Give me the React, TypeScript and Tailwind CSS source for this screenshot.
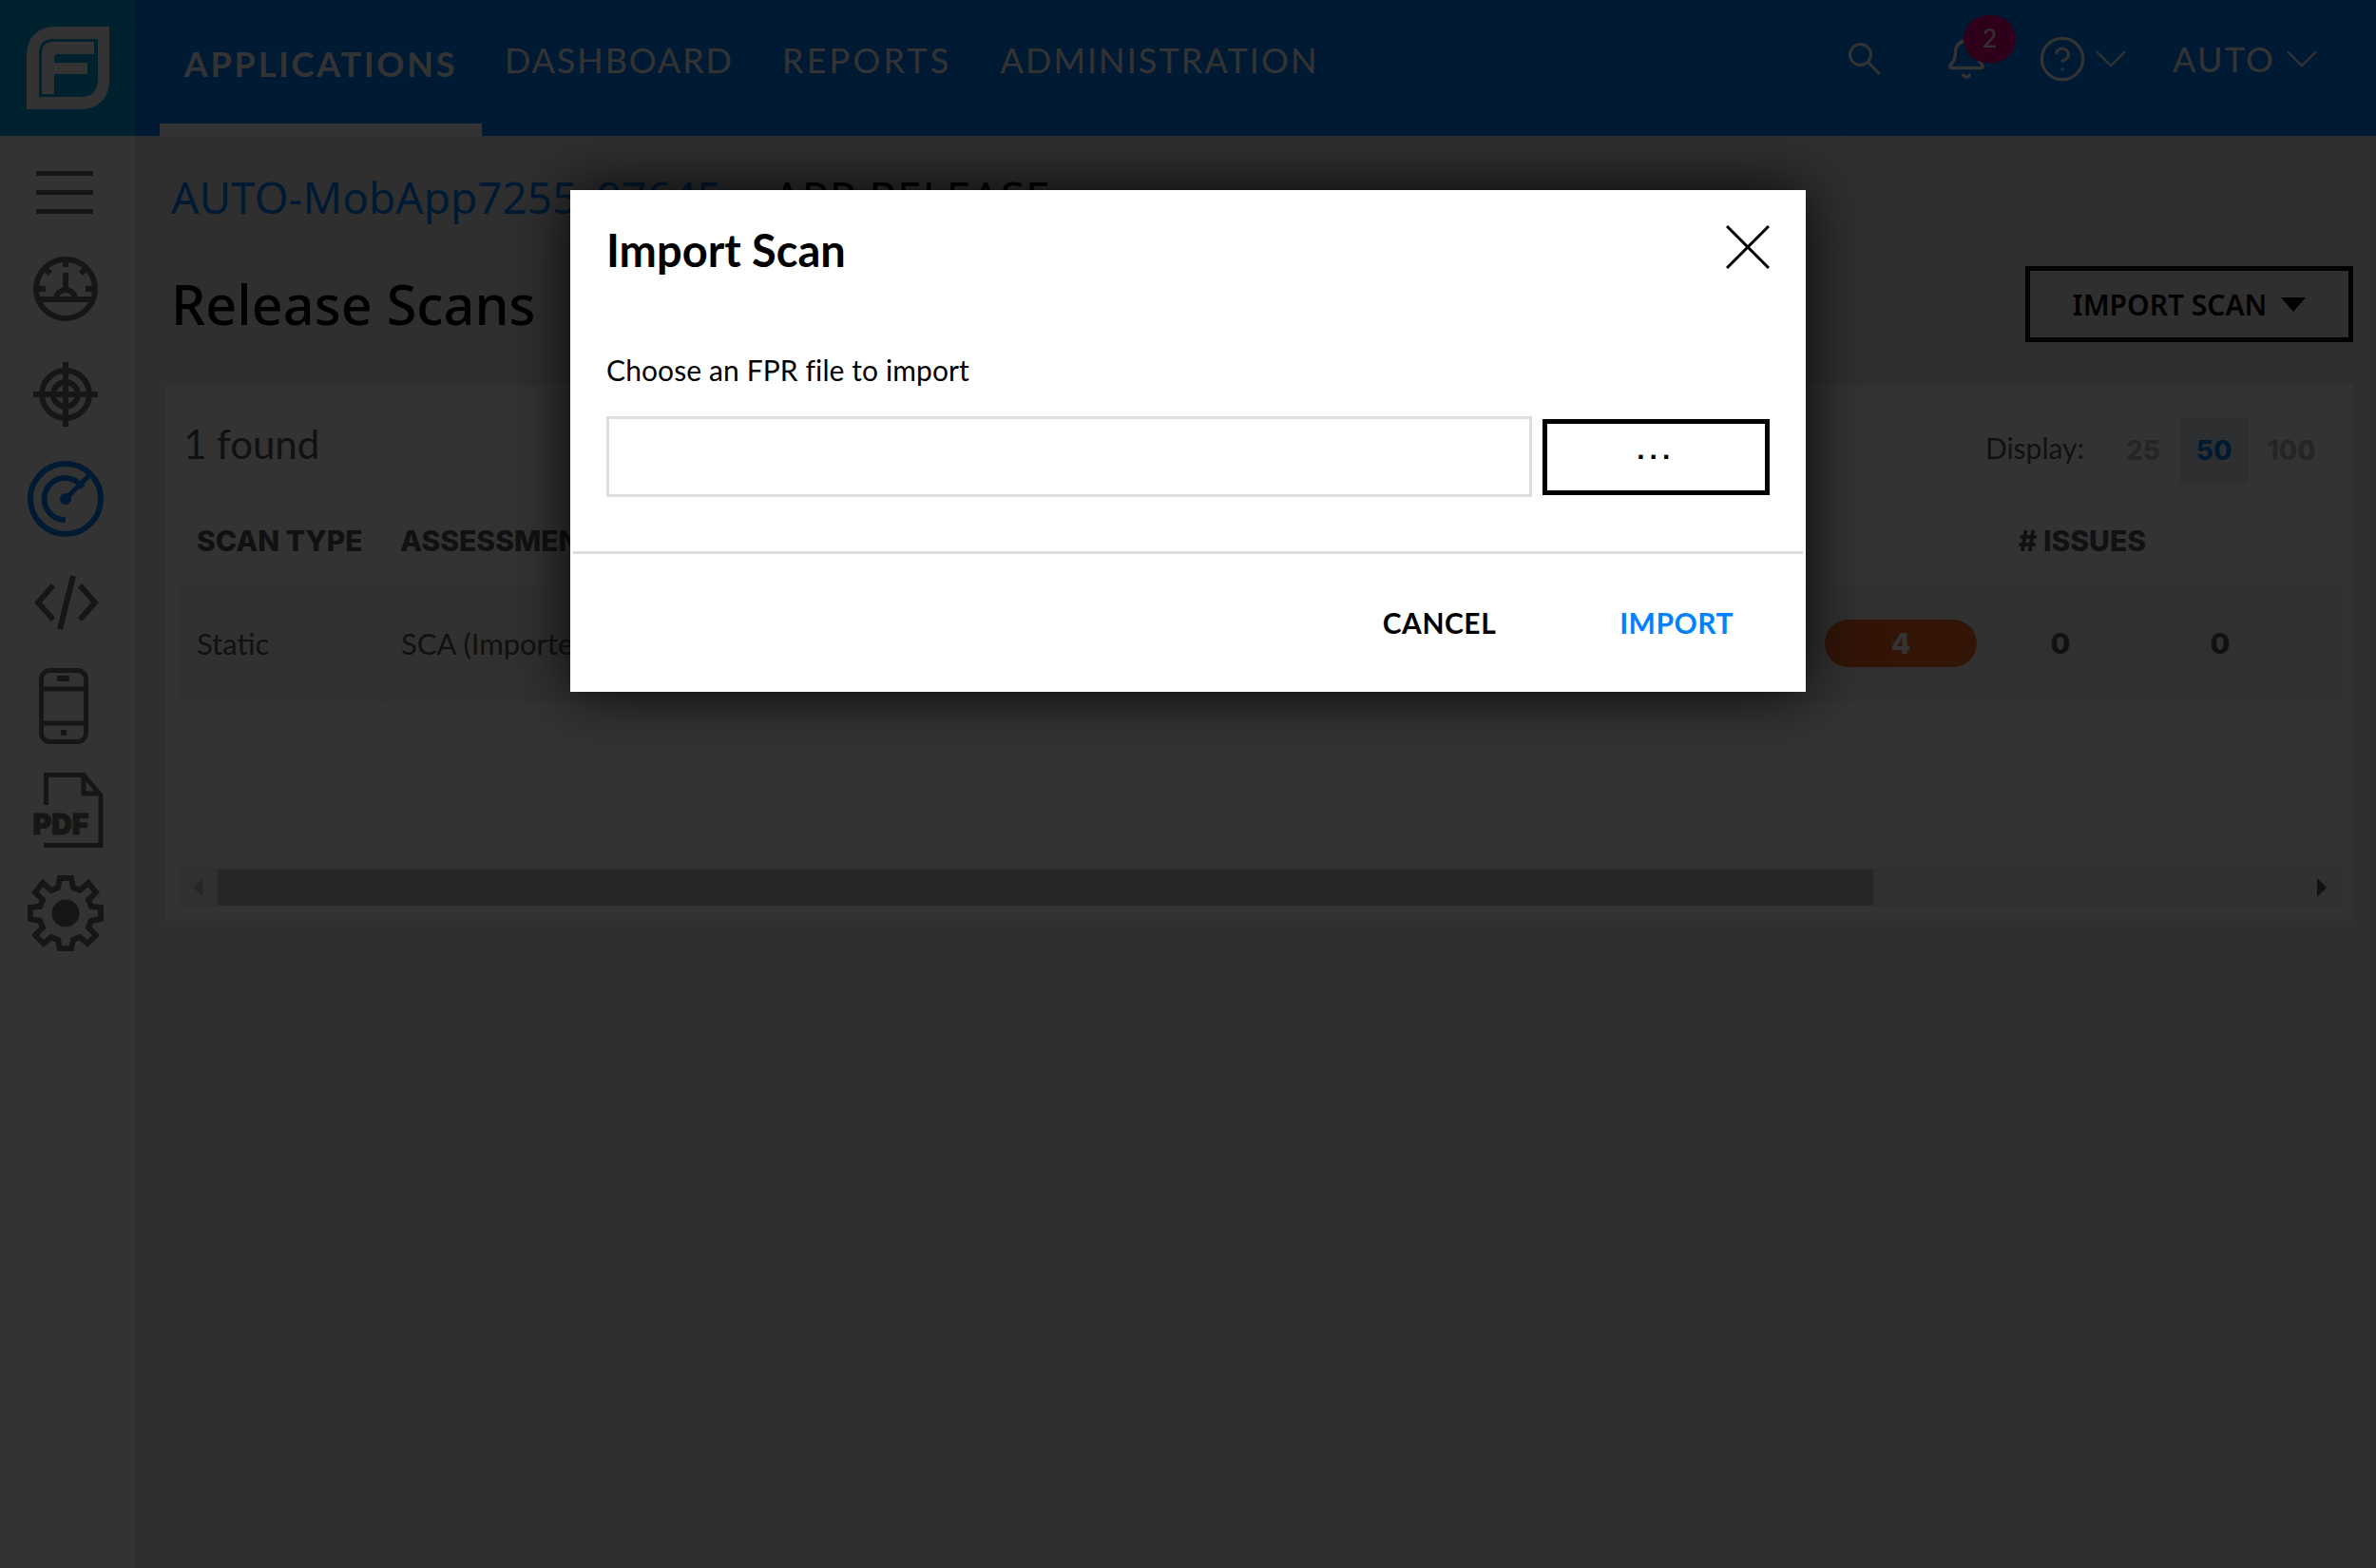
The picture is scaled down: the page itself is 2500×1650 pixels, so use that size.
import { Bell, CircleHelp, ChevronDown } from "lucide-react";

const navItems = [
  { label: "DASHBOARD", className: "tracking-[1.9px]" },
  { label: "REPORTS", className: "tracking-[3.2px]" },
  { label: "ADMINISTRATION", className: "tracking-[2.1px]" },
];

const Logo = () => (
  <svg viewBox="0 0 87 87" className="h-[87px] w-[87px]">
    <path d="M87 0H30C12 0 0 12 0 30V87H57C75 87 87 75 87 57Z" fill="#ffffff" />
    <path d="M75 13H28Q13 13 13 28V74H56Q75 74 75 56Z" fill="#00a5e6" />
    <path d="M16 71V28Q16 16 28 16H71V29H33Q29 29 29 33V38H64V50H29V71Z" fill="#ffffff" />
  </svg>
);

const SearchIcon = () => (
  <svg viewBox="0 0 34 34" className="h-[34px] w-[34px]" fill="none" stroke="#ffffff" strokeWidth="3">
    <circle cx="12.500" cy="12.500" r="11" />
    <path d="M20 20L33 33" />
  </svg>
);

const Hamburger = () => (
  <div className="flex w-[60px] flex-col gap-[15px]">
    <div className="h-[5px] bg-[#707070]" />
    <div className="h-[5px] bg-[#707070]" />
    <div className="h-[5px] bg-[#707070]" />
  </div>
);

const Gauge = () => (
  <svg viewBox="0 0 68 68" className="h-[68px] w-[68px]" fill="none" stroke="#707070" strokeWidth="6">
    <circle cx="34" cy="34" r="31" />
    <path d="M3 45H65" />
    <path d="M24 45A10 10 0 0 1 44 45" strokeWidth="6" />
    <path d="M34 17V34M34 3V11M6 34H13M55 34H62M13 13L18 18M55 13L50 18" strokeWidth="6" />
  </svg>
);

const Target = () => (
  <svg viewBox="0 0 68 68" className="h-[68px] w-[68px]" fill="none" stroke="#707070" strokeWidth="6">
    <circle cx="34" cy="34" r="25" />
    <circle cx="34" cy="34" r="13" />
    <path d="M34 0V68M0 34H68" />
  </svg>
);

const Radar = () => (
  <svg viewBox="0 0 80 80" className="h-20 w-20" fill="none" stroke="#0082ff" strokeWidth="6">
    <circle cx="40" cy="40" r="37" />
    <path d="M40 62A22 22 0 1 1 58 28" />
    <path d="M40 40L67 13" strokeWidth="5" />
    <circle cx="40" cy="40" r="6" fill="#0082ff" stroke="none" />
  </svg>
);

const Code = () => (
  <svg viewBox="0 0 68 58" className="h-[58px] w-[68px]" fill="none" stroke="#707070" strokeWidth="6">
    <path d="M20 11L4 29L20 47M48 11L64 29L48 47M41 1L27 57" />
  </svg>
);

const Phone = () => (
  <svg viewBox="0 0 52 80" className="h-20 w-[52px]" fill="none" stroke="#707070" strokeWidth="5">
    <rect x="2.500" y="2.500" width="47" height="75" rx="9" />
    <path d="M3 22H49M3 58H49" />
    <rect x="19" y="8" width="13" height="6" fill="#707070" stroke="none" />
    <rect x="23" y="65" width="6" height="6" fill="#707070" stroke="none" />
  </svg>
);

const PdfIcon = () => (
  <div className="relative h-20 w-[74px]">
    <svg viewBox="0 0 74 80" className="h-20 w-[74px]" fill="none" stroke="#707070" strokeWidth="5">
      <path d="M13.500 35V3.500H53L71 25V77.500H11M53 3V23H71" />
    </svg>
    <span className="absolute bottom-[10px] left-0 font-['Inter',sans-serif] text-[30px] leading-none font-black text-[#707070] [-webkit-text-stroke:1px_#707070]">
      PDF
    </span>
  </div>
);

const Gear = () => (
  <svg viewBox="0 0 80 80" className="h-20 w-20" fill="none" stroke="#707070" strokeWidth="6">
    <path d="M34 3H46L48 13L55 16L64 8L72 18L64 26L67 33L77 34V46L67 48L64 55L72 63L63 72L55 65L48 68L46 77H34L32 68L25 65L17 72L8 63L16 55L13 48L3 46V34L13 33L16 26L8 18L16 8L25 16L32 13Z" />
    <circle cx="40" cy="40" r="14.500" fill="#707070" stroke="none" />
  </svg>
);

const App = () => {
  return (
    <div className="relative flex h-[1650px] w-[2500px] flex-col overflow-hidden bg-[#ececec] font-['Lato',sans-serif]">
      <header className="flex h-[143px] items-stretch bg-[#0082ff] text-white">
        <div className="flex w-[143px] items-center justify-center bg-[#00a5e6]">
          <Logo />
        </div>
        <nav className="ml-[25px] flex items-stretch">
          <div className="flex w-[339px] justify-center border-b-[13px] border-white pt-[43px] text-[36px] leading-[48px] font-bold tracking-[2.8px]">
            APPLICATIONS
          </div>
          <div className="ml-[24px] flex gap-[51px] pt-[39px] text-[36px] leading-[48px]">
            {navItems.map((item) => (
              <span key={item.label} className={item.className}>
                {item.label}
              </span>
            ))}
          </div>
        </nav>
        <div className="ml-auto flex items-center pr-[49px] pb-[20px]">
          <SearchIcon />
          <div className="relative ml-[67px]">
            <Bell size={46} strokeWidth={1.8} />
            <span className="absolute -top-[23px] left-[20px] flex h-[50px] w-[55px] items-center justify-center rounded-full bg-[#e6007e] text-[26px]">
              2
            </span>
          </div>
          <CircleHelp size={52} strokeWidth={1.5} className="ml-[52px]" />
          <ChevronDown size={58} strokeWidth={0.9} className="-ml-[4px]" />
          <span className="ml-[36px] text-[36px] leading-[48px] tracking-[2.2px]">AUTO</span>
          <ChevronDown size={58} strokeWidth={0.9} className="-ml-[1px]" />
        </div>
      </header>
      <div className="flex flex-1">
        <aside className="flex w-[143px] flex-col items-center border-r border-[#e4e4e4] bg-white pt-[37px]">
          <div className="-ml-[6px]">
            <Hamburger />
          </div>
          <div className="mt-[45px] -ml-[5px]">
            <Gauge />
          </div>
          <div className="mt-[43px] -ml-[4px]">
            <Target />
          </div>
          <div className="mt-[36px] -ml-[5px]">
            <Radar />
          </div>
          <div className="mt-[40px] -ml-[2px]">
            <Code />
          </div>
          <div className="mt-[40px] -ml-[8px]">
            <Phone />
          </div>
          <div className="mt-[29px] ml-[1px]">
            <PdfIcon />
          </div>
          <div className="mt-[29px] -ml-[5px]">
            <Gear />
          </div>
        </aside>
        <main className="flex-1 pt-[32px] pr-[24px] pl-[32px]">
          <div className="ml-[5px] flex items-baseline font-['Noto_Sans',sans-serif] text-[46px] leading-[64px]">
            <span className="text-[#0082ff]">AUTO-MobApp7255_97645</span>
            <span className="ml-[54px] tracking-[1px] text-black">APP RELEASE</span>
          </div>
          <div className="mt-[31px] flex h-[100px] items-center">
            <h1 className="ml-[5px] font-['Noto_Sans',sans-serif] text-[57.5px] leading-[80px] font-medium text-black">Release Scans</h1>
            <button className="ml-auto flex h-[80px] w-[345px] items-center justify-center gap-[15px] border-[5px] border-black font-['Noto_Sans',sans-serif] text-[30px] font-semibold text-black">
              IMPORT SCAN
              <span className="h-0 w-0 border-x-[13px] border-t-[15px] border-x-transparent border-t-black" />
            </button>
          </div>
          <section className="mt-[35px] h-[564px] bg-white px-[12px] pt-[34px]">
            <div className="flex h-[70px] items-center">
              <span className="ml-[6px] pb-[14px] text-[42px] text-[#555555]">1 found</span>
              <div className="ml-auto flex items-center pr-[8px]">
                <span className="pb-[6px] text-[30px] text-[#555555]">Display:</span>
                <span className="w-[100px] pl-[24px] text-center font-['Inter',sans-serif] text-[28px] font-extrabold text-[#bbbbbb]">25</span>
                <span className="flex h-[70px] w-[73px] items-center justify-center bg-[#e0ecf6] font-['Inter',sans-serif] text-[28px] font-extrabold text-[#0082ff]">50</span>
                <span className="w-[90px] text-center font-['Inter',sans-serif] text-[28px] font-extrabold text-[#bbbbbb]">100</span>
              </div>
            </div>
            <div className="mt-[34px] flex h-[52px] items-center font-['Inter',sans-serif] text-[30px] font-extrabold text-[#555555]">
              <span className="w-[213px] pl-[20px]">SCAN TYPE</span>
              <span className="pl-[21px]">ASSESSMENT</span>
              <span className="mr-[206px] ml-auto"># ISSUES</span>
            </div>
            <div className="mt-[21px] flex h-[122px] items-center bg-[#f6f6f6] text-[31px] text-[#555555]">
              <div className="flex h-full w-[214px] items-center border-r border-[#e4e4e4] pl-[20px]">Static</div>
              <div className="pl-[21px]">SCA (Imported)</div>
              <div className="mr-[48px] ml-auto flex gap-[8px] text-center font-['Inter',sans-serif] text-[30px] font-extrabold">
                <span className="h-[50px] w-[160px] rounded-full bg-[#ff6a28] leading-[50px] text-white">4</span>
                <span className="h-[50px] w-[160px] rounded-full bg-[#f0f0f0] leading-[50px]">0</span>
                <span className="h-[50px] w-[160px] rounded-full bg-[#f0f0f0] leading-[50px]">0</span>
              </div>
            </div>
            <div className="mt-[175px] flex h-[41px] items-center bg-[#f1f1f1]">
              <div className="flex w-[42px] justify-center">
                <span className="h-0 w-0 border-y-[9px] border-r-[10px] border-y-transparent border-r-[#bbbbbb]" />
              </div>
              <div className="h-[38px] w-[1742px] bg-[#c4c4c4]" />
              <div className="ml-auto flex w-[42px] justify-center">
                <span className="h-0 w-0 border-y-[10px] border-l-[10px] border-y-transparent border-l-[#555555]" />
              </div>
            </div>
          </section>
        </main>
      </div>
      {/* modal backdrop */}
      <div className="absolute inset-0 flex items-start justify-center bg-black/80 pt-[200px]">
        <div className="h-[528px] w-[1300px] bg-white shadow-[0_0_60px_rgba(0,0,0,0.85)]">
          <div className="flex h-[168px] items-start justify-between pt-[33px] pr-[38px] pl-[38px]">
            <h2 className="text-[47px] leading-[60px] font-bold text-black">Import Scan</h2>
            <svg viewBox="0 0 46 46" className="mt-[4px] h-[46px] w-[46px]" fill="none" stroke="#000000" strokeWidth="3">
              <path d="M1 1L45 45M45 1L1 45" />
            </svg>
          </div>
          <div className="px-[38px]">
            <label className="block text-[30px] leading-[42px] tracking-[0.1px] text-black">Choose an FPR file to import</label>
            <div className="mt-[28px] flex items-center gap-[11px]">
              <input className="h-[85px] w-[976px] border-[3px] border-[#dedede] bg-white" readOnly />
              <button className="flex h-[80px] w-[240px] items-center justify-center border-[5px] border-black font-['Liberation_Sans',sans-serif] text-[30px] leading-none font-bold text-black">
                <span className="-mt-[16px] tracking-[5px]">...</span>
              </button>
            </div>
          </div>
          <div className="mx-[3px] mt-[57px] h-[3px] bg-[#dedede]" />
          <div className="flex h-[145px] items-center justify-end pr-[76px] text-[30px] font-bold tracking-[0.5px]">
            <button className="text-black">CANCEL</button>
            <button className="ml-[130px] text-[#0082ff]">IMPORT</button>
          </div>
        </div>
      </div>
    </div>
  );
};

export default App;
